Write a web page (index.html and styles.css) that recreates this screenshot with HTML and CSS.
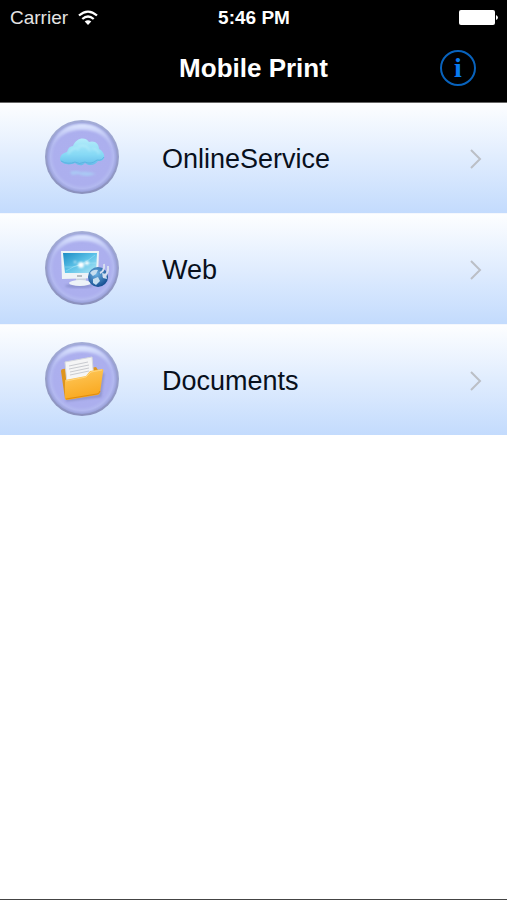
FILE: index.html
```html
<!DOCTYPE html>
<html lang="en">
<head>
<meta charset="utf-8">
<meta name="viewport" content="width=device-width, initial-scale=1">
<title>Mobile Print</title>
<link rel="stylesheet" href="styles.css">
</head>
<body>
<svg class="defs" width="0" height="0" aria-hidden="true">
  <defs>
    <linearGradient id="rim" x1="0" y1="0" x2="0" y2="1">
      <stop offset="0" stop-color="#a3acd6"/><stop offset="1" stop-color="#8b91bd"/>
    </linearGradient>
    <radialGradient id="orb" cx=".5" cy=".5" r=".5">
      <stop offset="0" stop-color="#adb0ef"/><stop offset=".8" stop-color="#acafee"/><stop offset=".9" stop-color="#b3b9f0"/><stop offset="1" stop-color="#989fd8"/>
    </radialGradient>
    <linearGradient id="gloss" x1="0" y1="0" x2="0" y2="1">
      <stop offset="0" stop-color="#dfe8ff"/><stop offset=".6" stop-color="#cbd4fa" stop-opacity=".35"/><stop offset="1" stop-color="#c0c8f5" stop-opacity="0"/>
    </linearGradient>
    <linearGradient id="cloud" x1="0" y1="0" x2="0" y2="1">
      <stop offset="0" stop-color="#b5ecfa"/><stop offset=".6" stop-color="#86d9f5"/><stop offset="1" stop-color="#66bdea"/>
    </linearGradient>
    <linearGradient id="screen" x1="0" y1="0" x2="1" y2="1">
      <stop offset="0" stop-color="#1c8cc4"/><stop offset=".5" stop-color="#5cc2e8"/><stop offset="1" stop-color="#b4e8f5"/>
    </linearGradient>
    <radialGradient id="globe" cx=".4" cy=".35" r=".65">
      <stop offset="0" stop-color="#6eb3e4"/><stop offset="1" stop-color="#174f92"/>
    </radialGradient>
    <linearGradient id="folder" x1="0" y1="0" x2=".3" y2="1">
      <stop offset="0" stop-color="#ffcb60"/><stop offset="1" stop-color="#f9a81f"/>
    </linearGradient>
    <filter id="soft" x="-20%" y="-20%" width="140%" height="140%"><feGaussianBlur stdDeviation="1"/></filter>
    <g id="button-orb">
      <circle cx="37" cy="37" r="37" fill="url(#rim)"/>
      <circle cx="37" cy="37" r="35" fill="url(#orb)"/>
      <path d="M6 29C9 12 22 4 37 4S65 12 68 29C61 16 51 10 37 10S13 16 6 29Z" fill="url(#gloss)" filter="url(#soft)"/>
    </g>
  </defs>
</svg>

<header class="top">
  <div class="status">
    <div class="carrier">
      <span>Carrier</span>
      <svg width="20" height="16" viewBox="0 0 20 16" fill="none" stroke="#fff" stroke-width="2.3" aria-hidden="true">
        <path d="M1 5.500Q10-2.300 19 5.500"/><path d="M4.300 9Q10 4 15.700 9"/><path d="M10 15L6.700 11.500Q10 8.800 13.300 11.500Z" fill="#fff" stroke="none"/>
      </svg>
    </div>
    <time class="clock">5:46 PM</time>
    <svg class="battery" width="39" height="16" viewBox="0 0 39 16" fill="#fff" aria-hidden="true">
      <rect x="0" y="0" width="36" height="15" rx="2"/><path d="M37 5Q39 6 39 7.500T37 10Z"/>
    </svg>
  </div>
  <div class="bar">
    <h1>Mobile Print</h1>
    <button class="info" type="button" aria-label="Information">i</button>
  </div>
</header>

<main>
  <ul class="menu">
    <li><a href="#online">
      <svg class="icon" viewBox="0 0 74 74" aria-hidden="true">
        <use href="#button-orb"/>
        <path d="M15 40C15 35 18 33 22 32C23 28 25 26 28 26C31 18 40 16 44 22C50 20 54 24 54 29C58 31 60 35 59 38C58 41 55 41 53 41C50 46 43 46 40 43C37 47 32 45 30 43C24 46 17 44 15 40Z" fill="url(#cloud)"/>
        <path d="M23 34Q29 25 34 30M33 27Q41 23 45 31M47 29Q52 28 54 34" fill="none" stroke="#c6f2fb" stroke-width="2" opacity=".45" filter="url(#soft)"/>
        <path d="M16 41Q23 45 30 42Q34 45 40 42Q46 45 52 40Q57 41 59 37" fill="none" stroke="#58afe0" opacity=".8"/>
        <g filter="url(#soft)"><path d="M25 52Q30 50 36 52Q43 51 51 54L43 56Q37 56 33 54L27 55Z" fill="#a9cff6" opacity=".8"/></g>
      </svg>
      <span>OnlineService</span>
      <svg class="chevron" viewBox="0 0 14 22" aria-hidden="true"><path d="M2 2L11 11L2 20"/></svg>
    </a></li>
    <li><a href="#web">
      <svg class="icon" viewBox="0 0 74 74" aria-hidden="true">
        <use href="#button-orb"/>
        <ellipse cx="34" cy="55" rx="14" ry="2" fill="#6f78b5" opacity=".5" filter="url(#soft)"/>
        <path d="M31 47H41V52H31Z" fill="#cbd4df"/>
        <ellipse cx="35" cy="52" rx="11" ry="3" fill="#eef3f8"/>
        <path d="M16 20L54 20L53 47L17 48Z" fill="#eef3f7"/>
        <path d="M18 22L52 22L51 42L20 42Z" fill="url(#screen)"/>
        <path d="M20 36Q34 38 50 24M21 40Q35 31 51 32" fill="none" stroke="#d2f5fc" opacity=".3"/>
        <g filter="url(#soft)" fill="#fff"><circle cx="30" cy="31" r="1"/><circle cx="36" cy="34" r="3"/><circle cx="42" cy="32" r="2"/></g>
        <path d="M32 45H37" stroke="#7d858d"/>
        <circle cx="53" cy="46" r="10" fill="url(#globe)"/>
        <path d="M45 42Q48 38 53 39L51 43L48 45ZM48 48L53 46L55 50L51 54L48 52ZM57 42L61 43L62 48L58 47Z" fill="#c7deef"/>
        <path d="M55 42Q60 40 59 33M58 46Q64 43 63 35" fill="none" stroke="#d6def0" stroke-width="2"/>
      </svg>
      <span>Web</span>
      <svg class="chevron" viewBox="0 0 14 22" aria-hidden="true"><path d="M2 2L11 11L2 20"/></svg>
    </a></li>
    <li><a href="#documents">
      <svg class="icon" viewBox="0 0 74 74" aria-hidden="true">
        <use href="#button-orb"/>
        <path d="M21 58L55 54L58 31" fill="none" stroke="#737aab" stroke-width="3" opacity=".5" filter="url(#soft)"/>
        <path d="M16 29Q16 27 18 27L26 26L29 29L51 25L53 28L51 52L20 57Z" fill="#df951c"/>
        <path d="M20 20L47 15L49 38L22 42Z" fill="#f5f5f5" stroke="#d5d8df"/>
        <path d="M24 24L43 20M24 27L44 23M25 30L44 26M25 33L44 29" stroke="#c9cbd0"/>
        <path d="M20 38L41 34L45 29L57 27Q59 27 58 30L55 51Q54 53 52 53L22 58Q20 58 20 56Z" fill="url(#folder)"/>
        <path d="M21 39L41 35L46 30L57 28" fill="none" stroke="#ffe2a0" opacity=".6"/>
        <path d="M21 57L52 52Q54 52 55 49" fill="none" stroke="#e18c0e"/>
      </svg>
      <span>Documents</span>
      <svg class="chevron" viewBox="0 0 14 22" aria-hidden="true"><path d="M2 2L11 11L2 20"/></svg>
    </a></li>
  </ul>
</main>
</body>
</html>
```
FILE: styles.css
```css
* { box-sizing: border-box; }

body {
  display: flex;
  flex-direction: column;
  min-height: 100vh;
  margin: 0;
  background: #fff;
  border-bottom: 1px solid #444;
  color: #08101c;
  font-family: "Liberation Sans", Arial, sans-serif;
}

.defs { position: absolute; }

.top {
  background: #000;
  border-bottom: 1px solid #666;
  color: #fff;
}

.status,
.bar {
  display: grid;
  grid-template-columns: 1fr auto 1fr;
  align-items: center;
}

.status {
  height: 36px;
  padding: 0 9px 0 10px;
  font-size: 19px;
}

.carrier {
  display: flex;
  align-items: center;
  gap: 10px;
  color: #e4e4e4;
}

.clock { font-weight: bold; }

.battery { justify-self: end; }

.bar {
  height: 66px;
  padding: 0 31px 2px;
}

h1 {
  grid-column: 2;
  margin: 0;
  font-size: 26px;
  line-height: 32px;
}

.info {
  justify-self: end;
  width: 36px;
  height: 36px;
  padding: 0;
  border: 2px solid #0862bc;
  border-radius: 50%;
  background: none;
  color: #087bf0;
  font-family: "Liberation Serif", "Times New Roman", serif;
  font-size: 28px;
  font-weight: bold;
  line-height: 30px;
}

.menu {
  margin: 0;
  padding: 0;
  list-style: none;
}

.menu li + li { border-top: 1px solid #f4f7fd; }

.menu a {
  display: flex;
  align-items: center;
  height: 110px;
  padding: 2px 24px 0 45px;
  background: linear-gradient(#fdfeff, #c3dbfd);
  color: inherit;
  font-size: 27px;
  text-decoration: none;
}

.menu span {
  flex: 1;
  padding-left: 43px;
}

.icon {
  width: 74px;
  height: 74px;
  margin-bottom: 4px;
}

.chevron {
  width: 14px;
  height: 22px;
  fill: none;
  stroke: #bbbfc6;
  stroke-width: 2;
}
```
